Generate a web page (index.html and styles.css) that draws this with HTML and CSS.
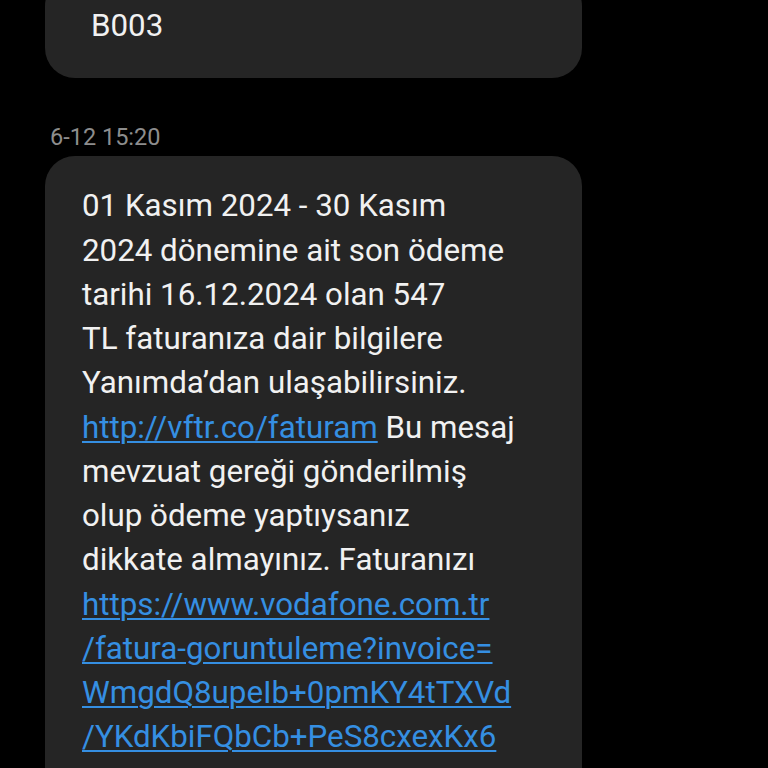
FILE: index.html
```html
<!DOCTYPE html>
<html>
<head>
<meta charset="utf-8">
<link rel="stylesheet" href="styles.css">
</head>
<body>
<div class="thread">
  <div class="bubble bubble-prev">
    <p class="msg indent">B003</p>
  </div>
  <div class="stamp">6-12 15:20</div>
  <div class="bubble">
    <p class="msg">01 Kasım 2024 - 30 Kasım<br>2024 dönemine ait son ödeme<br>tarihi 16.12.2024 olan 547<br>TL faturanıza dair bilgilere<br>Yanımda’dan ulaşabilirsiniz.<br><a class="link" href="#">http://vftr.co/faturam</a> Bu mesaj<br>mevzuat gereği gönderilmiş<br>olup ödeme yaptıysanız<br>dikkate almayınız. Faturanızı<br><a class="link" href="#">https://www.vodafone.com.tr<br>/fatura-goruntuleme?invoice=<br>WmgdQ8upeIb+0pmKY4tTXVd<br>/YKdKbiFQbCb+PeS8cxexKx6</a><br>&nbsp;</p>
  </div>
</div>
</body>
</html>
```

FILE: styles.css
```css
html, body {
  margin: 0;
  padding: 0;
  background: #000;
  height: 100%;
  overflow: hidden;
}

.thread {
  display: flex;
  flex-direction: column;
  align-items: flex-start;
  padding-left: 45px;
  font-family: Roboto, "Noto Sans", sans-serif;
}

.bubble {
  width: 537px;
  box-sizing: border-box;
  background: #252525;
  border-radius: 30px;
  padding: 28px 30px 30px 37px;
}

.bubble-prev {
  margin-top: -24px;
}

.msg {
  margin: 0;
  color: #f1f1f1;
  font-size: 31.3px;
  line-height: 44.25px;
}

.indent {
  padding-left: 9px;
}

.stamp {
  color: #8d8d8d;
  font-size: 23.5px;
  line-height: 30px;
  margin: 44px 0 4px 5px;
}

.link {
  color: #358fe2;
  text-decoration: underline;
  text-decoration-thickness: 1.5px;
  text-underline-offset: 3px;
}
```
